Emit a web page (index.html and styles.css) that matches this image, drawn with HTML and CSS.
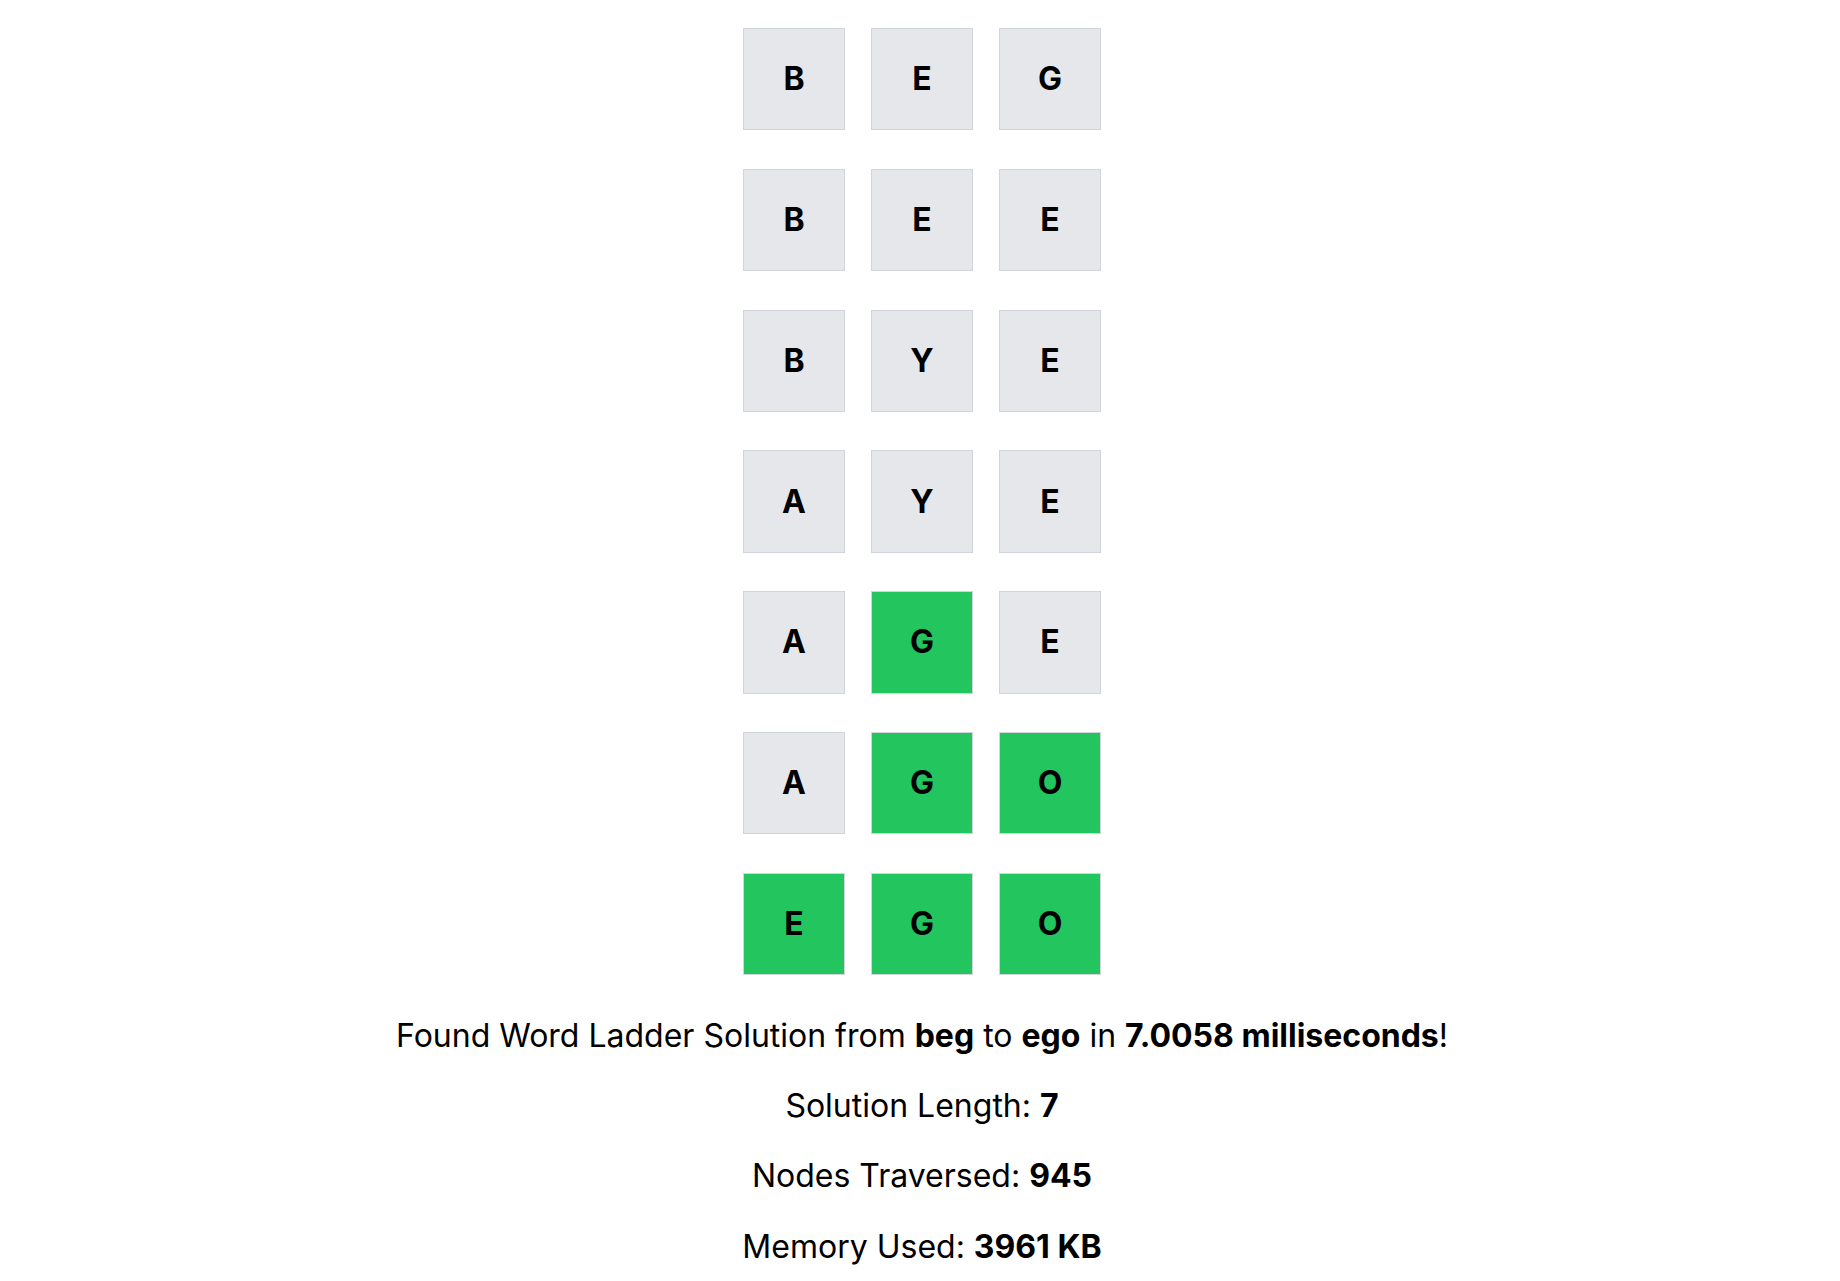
FILE: index.html
```html
<!DOCTYPE html>
<html>
<head>
<meta charset="utf-8">
<link rel="stylesheet" href="styles.css">
</head>
<body>
<main class="page">
  <div class="board">
    <div class="row"><div class="tile">B</div><div class="tile">E</div><div class="tile">G</div></div>
    <div class="row"><div class="tile">B</div><div class="tile">E</div><div class="tile">E</div></div>
    <div class="row"><div class="tile">B</div><div class="tile">Y</div><div class="tile">E</div></div>
    <div class="row"><div class="tile">A</div><div class="tile">Y</div><div class="tile">E</div></div>
    <div class="row"><div class="tile">A</div><div class="tile match">G</div><div class="tile">E</div></div>
    <div class="row"><div class="tile">A</div><div class="tile match">G</div><div class="tile match">O</div></div>
    <div class="row"><div class="tile match">E</div><div class="tile match">G</div><div class="tile match">O</div></div>
  </div>
  <div class="stats">
    <p class="line">Found Word Ladder Solution from <b>beg</b> to <b>ego</b> in <b>7.0058 milliseconds</b>!</p>
    <p class="line">Solution Length: <b>7</b></p>
    <p class="line">Nodes Traversed: <b>945</b></p>
    <p class="line">Memory Used: <b>3961 KB</b></p>
  </div>
</main>
</body>
</html>
```
FILE: styles.css
```css
html, body {
  margin: 0;
  padding: 0;
  background: #ffffff;
}
body {
  font-family: Inter, "Noto Sans", sans-serif;
  color: #000000;
}
.page {
  display: flex;
  flex-direction: column;
  align-items: center;
  padding: 28px 0 0 4px;
}
.board {
  display: flex;
  flex-direction: column;
  gap: 38.4px;
}
.row {
  display: flex;
  gap: 25.6px;
}
.tile {
  box-sizing: border-box;
  width: 102.4px;
  height: 102.4px;
  padding-bottom: 1px;
  background: #e5e7eb;
  border: 1.6px solid #d1d5db;
  display: flex;
  align-items: center;
  justify-content: center;
  font-size: 32px;
  font-weight: 700;
}
.tile.match {
  background: #22c55e;
}
.stats {
  display: flex;
  flex-direction: column;
  align-items: center;
  gap: 22.4px;
  margin-top: 36.5px;
}
.line {
  margin: 0;
  font-size: 32px;
  line-height: 48px;
  text-align: center;
}
.line b {
  font-weight: 700;
}
```
